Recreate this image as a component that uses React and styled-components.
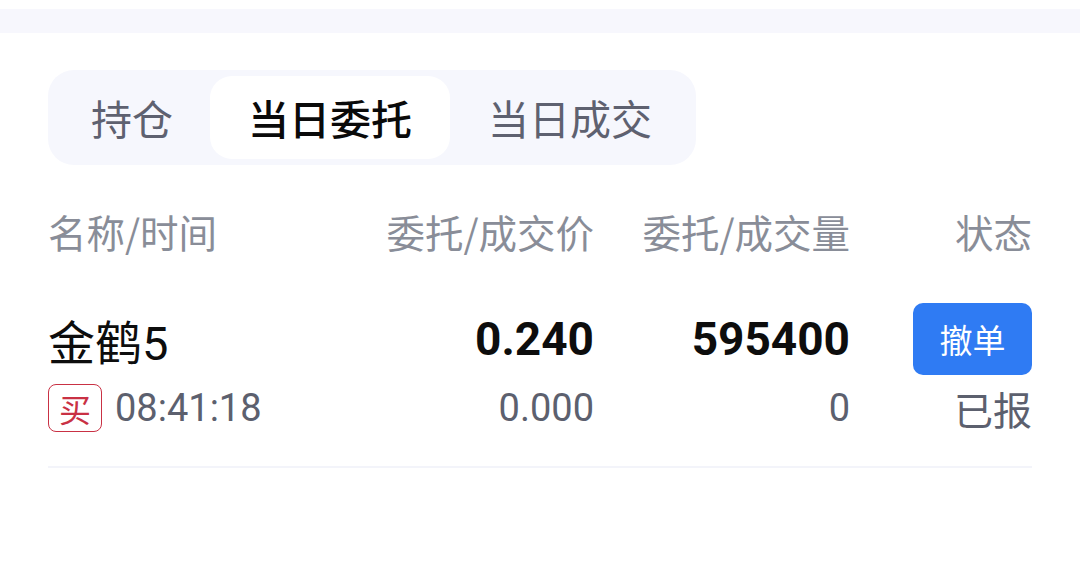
import React, { useState } from "react";
import styled, { createGlobalStyle } from "styled-components";

const Global = createGlobalStyle`
  html, body { margin: 0; padding: 0; background: #ffffff; }
  body { font-family: Roboto, "Noto Sans CJK SC", "Noto Sans", sans-serif; }
  * { box-sizing: border-box; }
`;

const Page = styled.div`
  width: 1080px;
  height: 568px;
  background: #ffffff;
  padding-top: 9px;
  overflow: hidden;
`;

const TopBand = styled.div`
  height: 24px;
  background: #f7f7fd;
`;

const Content = styled.div`
  padding: 37px 48px 0;
`;

const TabBar = styled.div`
  display: inline-flex;
  padding: 6px;
  background: #f6f7fd;
  border-radius: 26px;
`;

const Tab = styled.button`
  height: 83px;
  padding: 0 38px;
  border: none;
  border-radius: 22px;
  background: ${(p) => (p.$active ? "#ffffff" : "transparent")};
  color: ${(p) => (p.$active ? "#0a0a0a" : "#5e6170")};
  font-family: "Noto Sans CJK SC", sans-serif;
  font-size: 41px;
  font-weight: ${(p) => (p.$active ? 500 : 400)};
  line-height: 1;
  cursor: pointer;
  &:first-child { padding: 0 37px; }
`;

const Grid = styled.div`
  display: grid;
  grid-template-columns: 1fr 258px 256px 182px;
`;

const HeaderRow = styled(Grid)`
  margin-top: 41px;
  height: 50px;
  align-items: center;
`;

const HeadCell = styled.div`
  font-family: "Noto Sans CJK SC", sans-serif;
  font-size: 38.5px;
  line-height: 50px;
  color: #898d98;
  text-align: ${(p) => (p.$left ? "left" : "right")};
  white-space: nowrap;
`;

const DataRow = styled(Grid)`
  margin-top: 47px;
  padding-bottom: 25px;
  border-bottom: 2px solid #f3f4fa;
`;

const Cell = styled.div`
  display: flex;
  flex-direction: column;
  align-items: ${(p) => (p.$left ? "flex-start" : "flex-end")};
`;

const Primary = styled.div`
  height: 72px;
  display: flex;
  align-items: center;
  font-size: ${(p) => (p.$bold ? 46 : 47)}px;
  font-weight: ${(p) => (p.$bold ? 700 : 400)};
  color: #0d0d0d;
  white-space: nowrap;
`;

const Secondary = styled.div`
  height: 66px;
  display: flex;
  align-items: center;
  gap: 13px;
  font-size: ${(p) => p.$size || 38}px;
  color: #5c606e;
  white-space: nowrap;
`;

const SideBadge = styled.span`
  width: 54px;
  height: 48px;
  border: 1.5px solid #c93144;
  border-radius: 8px;
  color: #c93144;
  font-family: "Noto Sans CJK SC", sans-serif;
  font-size: 32px;
  display: inline-flex;
  align-items: center;
  justify-content: center;
  line-height: 1;
`;

const CancelButton = styled.button`
  width: 119px;
  height: 72px;
  border: none;
  border-radius: 10px;
  background: #2f7bf3;
  color: #ffffff;
  font-family: "Noto Sans CJK SC", sans-serif;
  font-size: 33px;
  line-height: 1;
  cursor: pointer;
`;

const tabs = ["持仓", "当日委托", "当日成交"];

export default function App() {
  const [active, setActive] = useState(1);
  return (
    <Page>
      <Global />
      <TopBand />
      <Content>
        <TabBar>
          {tabs.map((t, i) => (
            <Tab key={t} $active={i === active} onClick={() => setActive(i)}>
              {t}
            </Tab>
          ))}
        </TabBar>
        <HeaderRow>
          <HeadCell $left>名称/时间</HeadCell>
          <HeadCell>委托/成交价</HeadCell>
          <HeadCell>委托/成交量</HeadCell>
          <HeadCell>状态</HeadCell>
        </HeaderRow>
        <DataRow>
          <Cell $left>
            <Primary>金鹤5</Primary>
            <Secondary>
              <SideBadge>买</SideBadge>
              08:41:18
            </Secondary>
          </Cell>
          <Cell>
            <Primary $bold>0.240</Primary>
            <Secondary>0.000</Secondary>
          </Cell>
          <Cell>
            <Primary $bold>595400</Primary>
            <Secondary>0</Secondary>
          </Cell>
          <Cell>
            <CancelButton>撤单</CancelButton>
            <Secondary $size={39}>已报</Secondary>
          </Cell>
        </DataRow>
      </Content>
    </Page>
  );
}
